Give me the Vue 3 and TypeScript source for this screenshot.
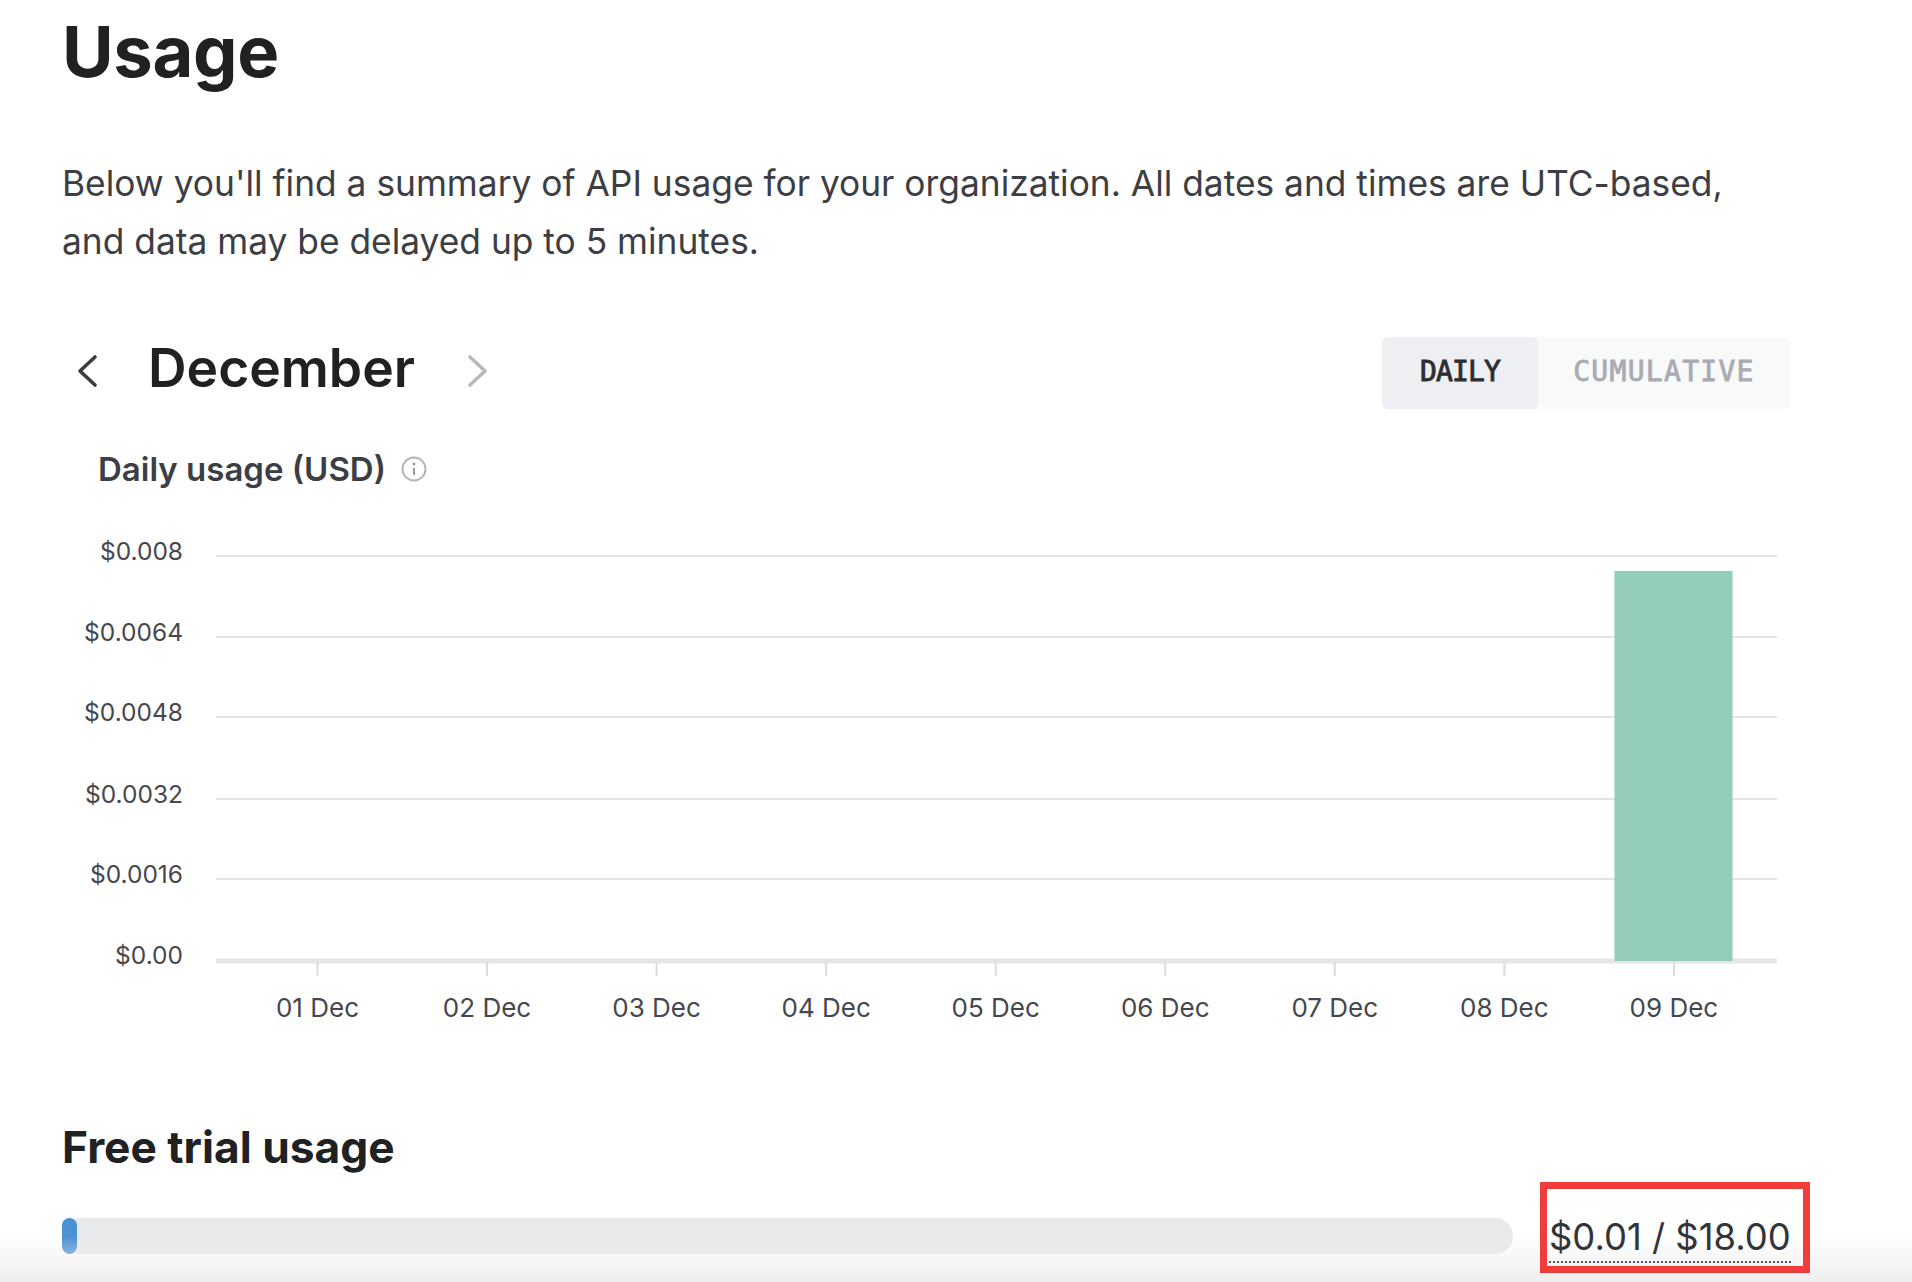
<script setup lang="ts">
const gridLines: { y: number; label: string }[] = [
  { y: 26, label: '$0.008' },
  { y: 107, label: '$0.0064' },
  { y: 187, label: '$0.0048' },
  { y: 269, label: '$0.0032' },
  { y: 349, label: '$0.0016' },
]
const days: { x: number; label: string }[] = ['01', '02', '03', '04', '05', '06', '07', '08', '09'].map((d, i) => ({
  x: 317.5 + i * 169.55,
  label: `${d} Dec`,
}))
</script>

<template>
  <div class="page">
    <h1 class="title">Usage</h1>
    <p class="intro">Below you'll find a summary of API usage for your organization. All dates and times are UTC-based, and data may be delayed up to 5 minutes.</p>

    <div class="month-row">
      <div class="month-nav">
        <svg class="chev" width="24" height="34" viewBox="0 0 24 34" fill="none"><path d="M20 3 L5 17 L20 31" stroke="#3a3b40" stroke-width="3.6" stroke-linecap="round" stroke-linejoin="round" /></svg>
        <span class="month">December</span>
        <svg class="chev chev-next" width="24" height="34" viewBox="0 0 24 34" fill="none"><path d="M4 3 L19 17 L4 31" stroke="#b9b9bd" stroke-width="3.6" stroke-linecap="round" stroke-linejoin="round" /></svg>
      </div>
      <div class="toggle">
        <span class="tab tab-on">DAILY</span>
        <span class="tab tab-off">CUMULATIVE</span>
      </div>
    </div>

    <div class="chart-head">
      <span class="chart-title">Daily usage (USD)</span>
      <svg width="26" height="26" viewBox="0 0 26 26" fill="none">
        <circle cx="13" cy="13" r="11.5" stroke="#b4b5b9" stroke-width="2" />
        <path d="M13 12 V19" stroke="#8e8f94" stroke-width="1.8" />
        <circle cx="13" cy="8" r="1.3" fill="#8e8f94" />
      </svg>
    </div>

    <svg class="chart" width="1730" height="500" viewBox="0 0 1730 500">
      <g v-for="line in gridLines" :key="line.label">
        <line x1="154" :y1="line.y" x2="1715" :y2="line.y" stroke="#e3e3e4" stroke-width="2" />
        <text class="axis axis-y" x="121" :y="line.y + 4" text-anchor="end">{{ line.label }}</text>
      </g>
      <text class="axis axis-y" x="121" y="434" text-anchor="end">$0.00</text>
      <rect x="154" y="428.5" width="1561" height="5" fill="#e6e6e7" />
      <rect x="1552.5" y="41" width="118" height="390" fill="#93cdb8" />
      <g v-for="day in days" :key="day.label">
        <line :x1="day.x - 62" y1="432" :x2="day.x - 62" y2="446" stroke="#dcdcde" stroke-width="2" />
        <text class="axis" :x="day.x - 62" y="487" text-anchor="middle">{{ day.label }}</text>
      </g>
    </svg>

    <h2 class="trial-title">Free trial usage</h2>

    <div class="trial-row">
      <div class="track"><div class="fill"></div></div>
      <div class="amount-box"><span class="amount">$0.01 / $18.00</span></div>
    </div>

    <div class="bottom-fade"></div>
  </div>
</template>

<style>
html, body { margin: 0; background: #fff; }
</style>

<style scoped>
.page {
  position: relative;
  box-sizing: border-box;
  width: 1912px;
  height: 1282px;
  padding: 14px 0 0 62px;
  overflow: hidden;
  background: #fff;
  color: #202123;
  font-family: Inter, "Liberation Sans", sans-serif;
}
.title {
  margin: 0;
  font-size: 70.5px;
  line-height: 76px;
  font-weight: 700;
  letter-spacing: -0.3px;
}
.intro {
  margin: 64.5px 0 0;
  width: 1690px;
  font-size: 35.35px;
  line-height: 58.5px;
  font-weight: 400;
  color: #3d3e44;
}
.month-row {
  display: flex;
  justify-content: space-between;
  align-items: center;
  width: 1728px;
  margin-top: 65px;
  height: 72px;
}
.month-nav { display: flex; align-items: center; margin-top: -4px; }
.chev { margin-left: 13px; }
.month {
  margin-left: 49px;
  padding-bottom: 6px;
  font-size: 53.4px;
  font-weight: 600;
}
.chev-next { margin-left: 51px; }
.toggle {
  display: flex;
  height: 72px;
  width: 408px;
  border-radius: 6px;
  background: #f8f9f9;
}
.tab {
  display: flex;
  align-items: center;
  justify-content: center;
  padding-bottom: 2px;
  box-sizing: border-box;
  font-family: "DejaVu Sans Mono", monospace;
  font-size: 28px;
  font-weight: 400;
}
.tab-on {
  width: 156px;
  border-radius: 6px;
  background: #eeeff2;
  color: #2d2e33;
  -webkit-text-stroke: 0.9px #2d2e33;
  letter-spacing: -0.9px;
}
.tab-off {
  flex: 1;
  color: #a9aab2;
  -webkit-text-stroke: 0.8px #a9aab2;
  letter-spacing: 1.3px;
}
.chart-head {
  display: flex;
  align-items: center;
  gap: 15px;
  margin: 40px 0 0 36px;
  height: 40px;
}
.chart-title {
  font-size: 33px;
  font-weight: 600;
  color: #3d3e44;
}
.chart { display: block; margin-top: 41px; }
.axis {
  font-size: 26px;
  fill: #46474d;
}
.axis-y { font-size: 24.5px; }
.trial-title {
  margin: 91.5px 0 0;
  font-size: 44.3px;
  line-height: 52px;
  font-weight: 700;
  color: #202123;
}
.trial-row {
  display: flex;
  align-items: flex-start;
}
.track {
  width: 1451px;
  height: 36px;
  margin-top: 45px;
  border-radius: 18px;
  background: #e8e9eb;
}
.fill {
  width: 15px;
  height: 36px;
  border-radius: 8px;
  background: #4a90d2;
}
.amount-box {
  box-sizing: border-box;
  width: 270px;
  height: 91px;
  margin: 9px 0 0 27px;
  padding: 27px 0 0 2px;
  border: 7px solid #f13c3c;
  position: relative;
  z-index: 1;
}
.amount {
  display: inline-block;
  padding-bottom: 3px;
  font-size: 36.4px;
  line-height: 42px;
  color: #333438;
  border-bottom: 2px dotted #55565b;
  white-space: nowrap;
}
.bottom-fade {
  position: absolute;
  left: 0;
  right: 0;
  bottom: 0;
  height: 46px;
  background: linear-gradient(to bottom, rgba(238, 238, 239, 0), rgba(238, 238, 239, 1));
}
</style>
